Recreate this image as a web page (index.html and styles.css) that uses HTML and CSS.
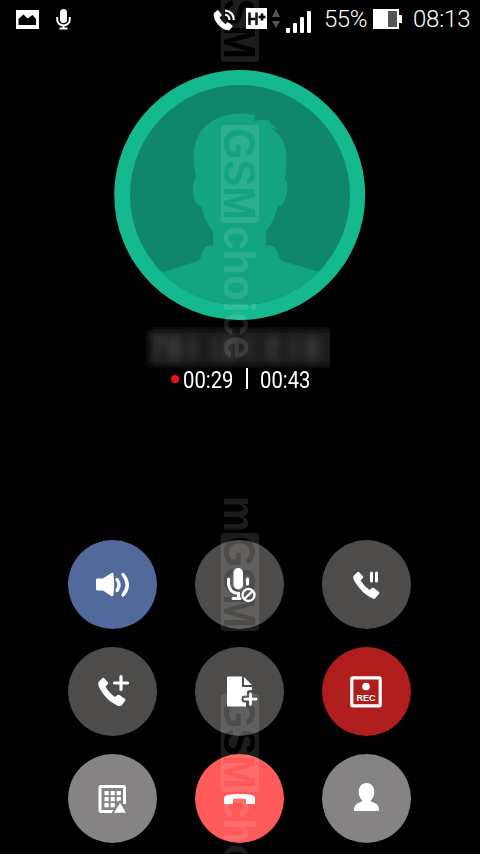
FILE: index.html
```html
<!DOCTYPE html>
<html lang="en">
<head>
<meta charset="utf-8">
<title>Call</title>
<link rel="stylesheet" href="styles.css">
</head>
<body>
<main class="phone">
  <header class="status">
    <svg class="picture" width="23" height="19" viewBox="0 0 23 19"><path fill="#fff" fill-rule="evenodd" d="M0 0h23v19H0zM2.500 15h17.500V9L16.500 5L11.500 8.500L7.500 4.500L2.500 9z"/></svg>
    <svg class="mic" width="15" height="21" viewBox="0 0 15 21"><rect x="4" width="7" height="14" rx="3.500" fill="#fff"/><path d="M1.200 8v2.500a6.300 6 0 0 0 12.600 0V8M7.500 16v4M3.500 19.600h8" fill="none" stroke="#fff" stroke-width="2"/></svg>
    <svg class="calling" width="23" height="22" viewBox="0 0 23 22"><path fill="#fff" d="M1 4L4 1.500Q5 1 6 2L8.500 5.500Q9 6.500 8 7.300L6.500 8.500Q8.800 12.800 12.500 15.200L14 13.700Q15 13 16 13.800L19 16.300Q20 17.300 19 18.300L16.500 21Q11 22 5 15.500Q-.5 9 1 4z"/><path d="M12 5.500Q16.300 6.500 16.500 11M12 1.500Q20.500 2.500 20.800 11" fill="none" stroke="#fff" stroke-width="2.200"/></svg>
    <svg class="network" width="34" height="21" viewBox="0 0 34 21"><path fill="#fff" d="M0 0h21v21H0z"/><path d="M3.500 4.500V17M10.500 4.500V17M3 11h7.500M12.500 9h7M16 5.500v7" fill="none" stroke="#000" stroke-width="2.600"/><path fill="#555" d="M26 9l4-8 4 8zM26 13h8l-4 7z"/></svg>
    <svg class="signal" width="25" height="22" viewBox="0 0 25 22"><g fill="#fff"><rect y="17" width="4" height="5" rx="1"/><rect x="7" y="12" width="4" height="10" rx="1"/><rect x="14" y="6" width="4" height="16" rx="1"/><rect x="21" width="4" height="22" rx="1"/></g></svg>
    <span class="percent">55%</span>
    <svg class="battery" width="29" height="20" viewBox="0 0 29 20"><path fill="#fff" d="M0 0h26v6h3v8h-3v6H0z"/><path fill="#555" d="M15 2h9v16h-9z"/></svg>
    <span class="clock">08:13</span>
  </header>

  <svg class="avatar" width="252" height="250" viewBox="0 0 252 250">
    <defs><clipPath id="portrait"><circle cx="126" cy="125" r="110"/></clipPath></defs>
    <ellipse cx="125.700" cy="125" rx="125.500" ry="125" fill="#15b98f"/>
    <circle cx="126" cy="125" r="110" fill="#108769"/>
    <path clip-path="url(#portrait)" fill="#12a580" d="M46 203L84 191Q87 189 88 182Q90 175 99 175V162Q91 151 87 136Q81 136 79 123Q78 112 82 108C77 82 79 64 98 51Q117 40 141 45L140 51Q151 48 156 51L153 46L157 54L164 60L155 57Q170 65 172 82Q173 96 171 109Q176 115 171 129Q169 137 164 136Q160 151 152 162V175Q162 175 164 183Q165 189 168 191L206 202V250H46z"/>
  </svg>

  <div class="number">
    <svg width="191" height="41" viewBox="0 0 191 41"><defs><filter id="soft" x="-10%" y="-50%" width="120%" height="200%"><feGaussianBlur stdDeviation="4.500"/></filter></defs>
      <rect x="10" y="2" width="191" height="37" fill="#1a1a1a" filter="url(#soft)"/>
      <g fill="#363636" filter="url(#soft)"><path d="M12 8h13v5l-6 20h-6l6-19h-7zM28 8h15v25H28zM51 8h6v25h-6zM74 10h5v23h-5zM85 9h12v24H85zM108 9h5v24h-5zM128 10h13v7l-7 11h8v5h-14zM152 9h5v24h-5zM166 9h14v24h-14z"/></g>
    </svg>
  </div>

  <div class="timers">
    <i class="dot"></i>
    <span class="time">00:29</span>
    <i class="divider"></i>
    <span class="time">00:43</span>
  </div>

  <section class="controls">
    <button class="key speaker" aria-label="Speaker"><svg viewBox="0 0 89 89"><path fill="#fff" d="M28 39.500Q28 38.500 29 38.500H35L42.500 33.500Q45 32 45.500 34Q47 45 45.500 55Q45 57 42.500 55.500L35 50.500H29Q28 50.500 28 49.500z"/><path d="M49 39.500Q53 45 49 50.500M55 34.500Q63.500 45 55 55" fill="none" stroke="#fff" stroke-width="3.400" stroke-linecap="round"/></svg></button>
    <button class="key" aria-label="Mute"><svg viewBox="0 0 89 89"><rect x="38.500" y="28" width="9.500" height="21.500" rx="4.700" fill="#fff"/><path d="M33.500 39v5Q34.500 53 43.500 53.500V58M52.500 39v5M38 58.500H45" fill="none" stroke="#fff" stroke-width="3" stroke-linecap="round"/><circle cx="53.500" cy="55" r="6" fill="#4d4c4a" stroke="#fff" stroke-width="2.300"/><path d="M49.500 59l8-8" stroke="#fff" stroke-width="2.300"/></svg></button>
    <button class="key" aria-label="Hold"><svg viewBox="0 0 89 89"><path fill="#fff" d="M31.500 36L35.500 32Q36.500 31.500 37.500 32.500L41 36.500Q41.500 37.500 40.500 38.500L38.500 40.500Q42 46 47.500 50L50 48Q51 47.500 52 48L57 52Q58 53 57 54L53 58.500Q52 59 50 58.200Q40 53.500 33 42Q30.500 38 31.500 36z"/><path d="M49.500 33v8M54.500 33v8" stroke="#fff" stroke-width="3" stroke-linecap="round"/></svg></button>
    <button class="key" aria-label="Add call"><svg viewBox="0 0 89 89"><path fill="#fff" d="M30.500 35L34.500 31Q35.500 30.500 36.500 31.500L40 35.500Q40.500 36.500 39.500 37.500L37.500 39.500Q41 46 47 50L49.500 48Q50.500 47.500 51.500 48L57 52Q58 53 57 54L53.500 58.500Q52 59.500 49 58.500Q38 53 32 42Q29.500 37.500 30.500 35z"/><path d="M46.500 36h13M53 29.500v13" stroke="#fff" stroke-width="3.200" stroke-linecap="round"/></svg></button>
    <button class="key" aria-label="Add note"><svg viewBox="0 0 89 89"><path fill="#fff" d="M33 29.500H47V40H57V44H52V49H47V54H51V59.500H33Q32 59.500 32 58.500V30.500Q32 29.500 33 29.500zM49 30L57 38H49z"/><path d="M55.500 46.500v11M50 52h11" stroke="#4d4c4a" stroke-width="7" stroke-linecap="round"/><path d="M55.500 47v10.500M50 52.200h11" stroke="#fff" stroke-width="2.800" stroke-linecap="round"/></svg></button>
    <button class="key record" aria-label="Record"><svg viewBox="0 0 89 89"><rect x="29.800" y="30.800" width="28.400" height="28" rx="1" fill="none" stroke="#fff" stroke-width="3.200"/><circle cx="44" cy="39.500" r="3.800" fill="#fff"/><text class="rec" x="44" y="54" text-anchor="middle" textLength="19" lengthAdjust="spacingAndGlyphs">REC</text></svg></button>
    <button class="key light" aria-label="Keypad"><svg viewBox="0 0 89 89"><path d="M46 57.500H33Q32 57.500 32 56.500V33.500Q32 32.500 33 32.500H55.500Q56.500 32.500 56.500 33.500V50" fill="none" stroke="#fff" stroke-width="3"/><g fill="#fff"><path d="M36.500 37h4.200v4.200h-4.200zM42.600 37h4.200v4.200h-4.200zM48.700 37h4.200v4.200h-4.200zM36.500 43h4.200v4.200h-4.200zM42.600 43h4.200v4.200h-4.200zM48.700 43h4.200v4.200h-4.200zM36.500 49h4.200v4.200h-4.200zM42.600 49h4.200v4.200h-4.200z"/><path d="M46 58.800L52 49.500L58 58.800z" stroke="#858384" stroke-width="4"/><path d="M46 58.800L52 49L58 58.800z"/></g></svg></button>
    <button class="key end" aria-label="End call"><svg viewBox="0 0 89 89"><path fill="#fff" d="M29 44Q29 42 32 41Q44.500 38.800 57 41Q60 42 60 44V49Q60 50 59 50H52Q51 50 51 49V45Q44.500 43.800 38 45V49Q38 50 37 50H30Q29 50 29 49z"/></svg></button>
    <button class="key light" aria-label="Contact"><svg viewBox="0 0 89 89"><path fill="#fff" d="M44.500 29C49.500 29 52.500 33 52.300 38.500Q52 43.500 48.500 46.500Q49 48 52 48.800Q57 50.500 57.200 56Q57.200 57 56 57H33Q31.800 57 31.800 56Q32 50.500 37 48.800Q40 48 40.500 46.500Q37 43.500 36.700 38.500C36.500 33 39.500 29 44.500 29z"/></svg></button>
  </section>

  <svg class="watermark" width="40" height="854" viewBox="0 0 40 854" aria-hidden="true">
    <defs>
      <mask id="badge" maskUnits="userSpaceOnUse" x="0" y="0" width="98" height="40"><rect width="98" height="39" rx="4" fill="#fff"/><text x="3" y="36" fill="#000" textLength="92" lengthAdjust="spacingAndGlyphs">GSM</text></mask>
      <g id="gsm"><rect width="98" height="39" rx="4" mask="url(#badge)"/><rect x="1" y="1" width="96" height="37" rx="3" fill="none" stroke="#fff" stroke-opacity=".3"/></g>
      <g id="mark"><use href="#gsm"/><text x="101" y="36" textLength="133" lengthAdjust="spacingAndGlyphs">choice</text></g>
    </defs>
    <g fill="#fff">
      <use href="#gsm" transform="translate(39.500 -36) rotate(90)"/>
      <use href="#mark" transform="translate(39.500 125) rotate(90)"/>
      <g transform="translate(39.500 496) rotate(90)"><text x="0" y="36" textLength="36" lengthAdjust="spacingAndGlyphs">m</text></g>
      <use href="#gsm" transform="translate(39.500 533) rotate(90)"/>
      <use href="#mark" transform="translate(39.500 694) rotate(90)"/>
    </g>
  </svg>
</main>
</body>
</html>
```
FILE: styles.css
```css
* { box-sizing: border-box; }
body { margin: 0; background: #000; }
.phone {
  position: relative;
  display: flex;
  flex-direction: column;
  align-items: center;
  width: 480px;
  height: 854px;
  overflow: hidden;
  background: #000;
  color: #fff;
  font-family: Roboto, sans-serif;
}
svg { display: block; flex: none; }
.status {
  display: flex;
  align-items: flex-start;
  width: 100%;
  height: 70px;
  padding: 8px 0 0 16px;
  font-size: 24px;
  font-weight: 350;
  line-height: 22px;
}
.picture { margin-top: 2px; }
.mic { margin: 1px 0 0 17px; }
.calling { margin: 1px 0 0 142px; }
.network { margin-left: 10px; }
.signal { margin: 3px 0 0 6px; }
.percent { width: 49px; margin-left: 13px; letter-spacing: -.5px; }
.battery { margin-top: 1px; }
.clock { margin-left: 11px; letter-spacing: -.2px; }
.avatar { margin-right: 1px; }
.number { margin: 7px 11px 0 0; }
.timers {
  display: flex;
  align-items: center;
  width: 140px;
  height: 24px;
}
.time {
  width: 50px;
  font-size: 24px;
  line-height: 24px;
  transform: scaleX(.845);
  transform-origin: 0 50%;
}
.dot { flex: none; width: 8px; height: 8px; margin: 0 4px 3px 1px; border-radius: 50%; background: #f01010; }
.divider { flex: none; width: 2px; height: 21px; margin: -3px 12px 0 13px; background: #fff; }
.controls {
  display: grid;
  grid-template-columns: repeat(3, 89px);
  gap: 18px 38px;
  margin: 148px 1px 0 0;
}
.key {
  width: 89px;
  height: 89px;
  padding: 0;
  border: 0;
  border-radius: 50%;
  background: #4d4c4a;
}
.speaker { background: #52699c; }
.record { background: #b01d1d; }
.light { background: #858384; }
.end { background: #ff5a5a; }
.rec { fill: #fff; font: bold 9.5px "Liberation Sans", sans-serif; }
.watermark {
  position: absolute;
  top: 0;
  left: 220px;
  opacity: .11;
  pointer-events: none;
}
.watermark text { font: bold 45px "Liberation Sans", sans-serif; }
```
